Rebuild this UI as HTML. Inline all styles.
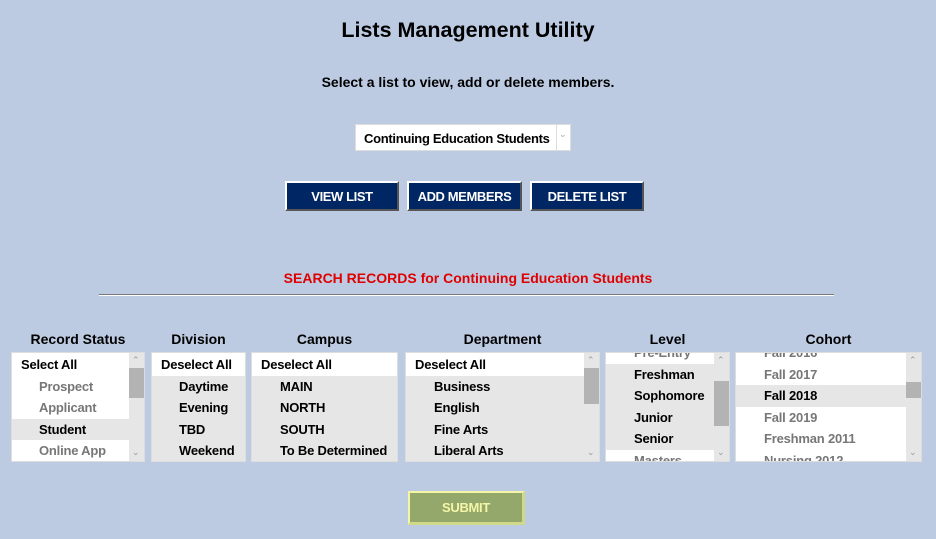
<!DOCTYPE html>
<html><head><style>
body{margin:0;width:936px;height:539px;background:#bccbe2;font-family:"Liberation Sans",Arial,sans-serif;position:relative;overflow:hidden}
.a{position:absolute}
h1{position:absolute;top:18px;left:0;width:936px;text-align:center;font-size:21.5px;margin:0;font-weight:bold;color:#000}
.c{left:0;width:936px;text-align:center;font-weight:bold}
.btn{position:absolute;top:181px;height:30px;background:#002663;color:#fff;font-weight:bold;font-size:13px;text-align:center;line-height:27px;border-top:2px solid #fff;border-left:2px solid #fff;border-right:2px solid #555;border-bottom:2px solid #555;box-sizing:border-box;letter-spacing:-0.4px}
.hd{position:absolute;top:331px;font-weight:bold;font-size:14px;text-align:center}
.box{position:absolute;top:352px;height:110px;background:#fff;border:1px solid #ddd;box-sizing:border-box;overflow:hidden}
.r{position:absolute;left:0;height:21.5px;line-height:21.5px;font-weight:bold;font-size:13px;white-space:nowrap;padding-left:9px;box-sizing:border-box;letter-spacing:-0.2px}
.g{background:#e6e6e6}
.m{color:#777}
.sb{position:absolute;top:0;right:0;width:15px;height:108px;background:#e6e6e6}
.th{position:absolute;left:0;width:15px;background:#b3b3b3}
.ar{position:absolute;left:3px;font-size:9px;color:#999}
</style></head><body>
<h1>Lists Management Utility</h1>
<div class="a c" style="top:74px;font-size:14px">Select a list to view, add or delete members.</div>
<div class="a" style="left:355px;top:124px;width:216px;height:27px;background:#fff;border:1px solid #ddd;box-sizing:border-box">
<span class="a" style="left:8px;top:6px;font-size:13px;font-weight:bold;letter-spacing:-0.3px">Continuing Education Students</span>
<span class="a" style="left:200px;top:0;width:1px;height:25px;background:#ddd"></span>
<span class="a" style="left:203px;top:4px;font-size:9px;color:#aaa">&#8964;</span>
</div>
<div class="btn" style="left:285px;width:114px">VIEW LIST</div>
<div class="btn" style="left:407px;width:115px">ADD MEMBERS</div>
<div class="btn" style="left:530px;width:114px">DELETE LIST</div>
<div class="a c" style="top:270px;font-size:14px;color:#e00000">SEARCH RECORDS for Continuing Education Students</div>
<div class="a" style="left:99px;top:294px;width:735px;height:1px;background:#777;border-bottom:1px solid #fff"></div>

<div class="hd" style="left:11px;width:134px">Record Status</div>
<div class="hd" style="left:151px;width:95px">Division</div>
<div class="hd" style="left:251px;width:147px">Campus</div>
<div class="hd" style="left:405px;width:195px">Department</div>
<div class="hd" style="left:605px;width:125px">Level</div>
<div class="hd" style="left:735px;width:187px">Cohort</div>

<div class="box" style="left:11px;width:134px">
<div class="r" style="top:1px;width:119px">Select All</div>
<div class="r m" style="top:22.5px;width:119px;padding-left:27px">Prospect</div>
<div class="r m" style="top:44px;width:119px;padding-left:27px">Applicant</div>
<div class="r g" style="top:65.5px;width:119px;padding-left:27px">Student</div>
<div class="r m" style="top:87px;width:119px;padding-left:27px">Online App</div>
<div class="sb"><span class="ar" style="top:2px">&#8963;</span><div class="th" style="top:15px;height:30px"></div><span class="ar" style="top:94px">&#8964;</span></div>
</div>

<div class="box" style="left:151px;width:95px">
<div class="r" style="top:1px;width:95px">Deselect All</div>
<div class="r g" style="top:22.5px;width:95px;padding-left:27px">Daytime</div>
<div class="r g" style="top:44px;width:95px;padding-left:27px">Evening</div>
<div class="r g" style="top:65.5px;width:95px;padding-left:27px">TBD</div>
<div class="r g" style="top:87px;width:95px;padding-left:27px;height:23px">Weekend</div>
</div>

<div class="box" style="left:251px;width:147px">
<div class="r" style="top:1px;width:147px">Deselect All</div>
<div class="r g" style="top:22.5px;width:147px;padding-left:28px">MAIN</div>
<div class="r g" style="top:44px;width:147px;padding-left:28px">NORTH</div>
<div class="r g" style="top:65.5px;width:147px;padding-left:28px">SOUTH</div>
<div class="r g" style="top:87px;width:147px;padding-left:28px;height:23px">To Be Determined</div>
</div>

<div class="box" style="left:405px;width:195px">
<div class="r" style="top:1px;width:180px">Deselect All</div>
<div class="r g" style="top:22.5px;width:180px;padding-left:28px">Business</div>
<div class="r g" style="top:44px;width:180px;padding-left:28px">English</div>
<div class="r g" style="top:65.5px;width:180px;padding-left:28px">Fine Arts</div>
<div class="r g" style="top:87px;width:180px;padding-left:28px;height:23px">Liberal Arts</div>
<div class="sb"><span class="ar" style="top:2px">&#8963;</span><div class="th" style="top:15px;height:36px"></div><span class="ar" style="top:94px">&#8964;</span></div>
</div>

<div class="box" style="left:605px;width:125px">
<div class="r" style="top:-11px;width:110px;padding-left:28px;color:#777">Pre-Entry</div>
<div class="r g" style="top:10.5px;width:110px;padding-left:28px">Freshman</div>
<div class="r g" style="top:32px;width:110px;padding-left:28px">Sophomore</div>
<div class="r g" style="top:53.5px;width:110px;padding-left:28px">Junior</div>
<div class="r g" style="top:75px;width:110px;padding-left:28px">Senior</div>
<div class="r m" style="top:96.5px;width:110px;padding-left:28px">Masters</div>
<div class="sb"><span class="ar" style="top:2px">&#8963;</span><div class="th" style="top:28px;height:45px"></div><span class="ar" style="top:94px">&#8964;</span></div>
</div>

<div class="box" style="left:735px;width:187px">
<div class="r m" style="top:-11px;width:172px;padding-left:28px">Fall 2016</div>
<div class="r m" style="top:10.5px;width:172px;padding-left:28px">Fall 2017</div>
<div class="r g" style="top:32px;width:172px;padding-left:28px">Fall 2018</div>
<div class="r m" style="top:53.5px;width:172px;padding-left:28px">Fall 2019</div>
<div class="r m" style="top:75px;width:172px;padding-left:28px">Freshman 2011</div>
<div class="r m" style="top:96.5px;width:172px;padding-left:28px">Nursing 2012</div>
<div class="sb"><span class="ar" style="top:2px">&#8963;</span><div class="th" style="top:29px;height:16px"></div><span class="ar" style="top:94px">&#8964;</span></div>
</div>

<div class="a" style="left:408px;top:491px;width:117px;height:34px;background:#93a86a;border-top:2px solid #f5f5a8;border-left:2px solid #f5f5a8;border-right:3px solid #d2d88a;border-bottom:3px solid #d2d88a;box-sizing:border-box;color:#f5f5a8;font-weight:bold;font-size:13px;text-align:center;line-height:29px;letter-spacing:-0.3px">SUBMIT</div>
</body></html>
